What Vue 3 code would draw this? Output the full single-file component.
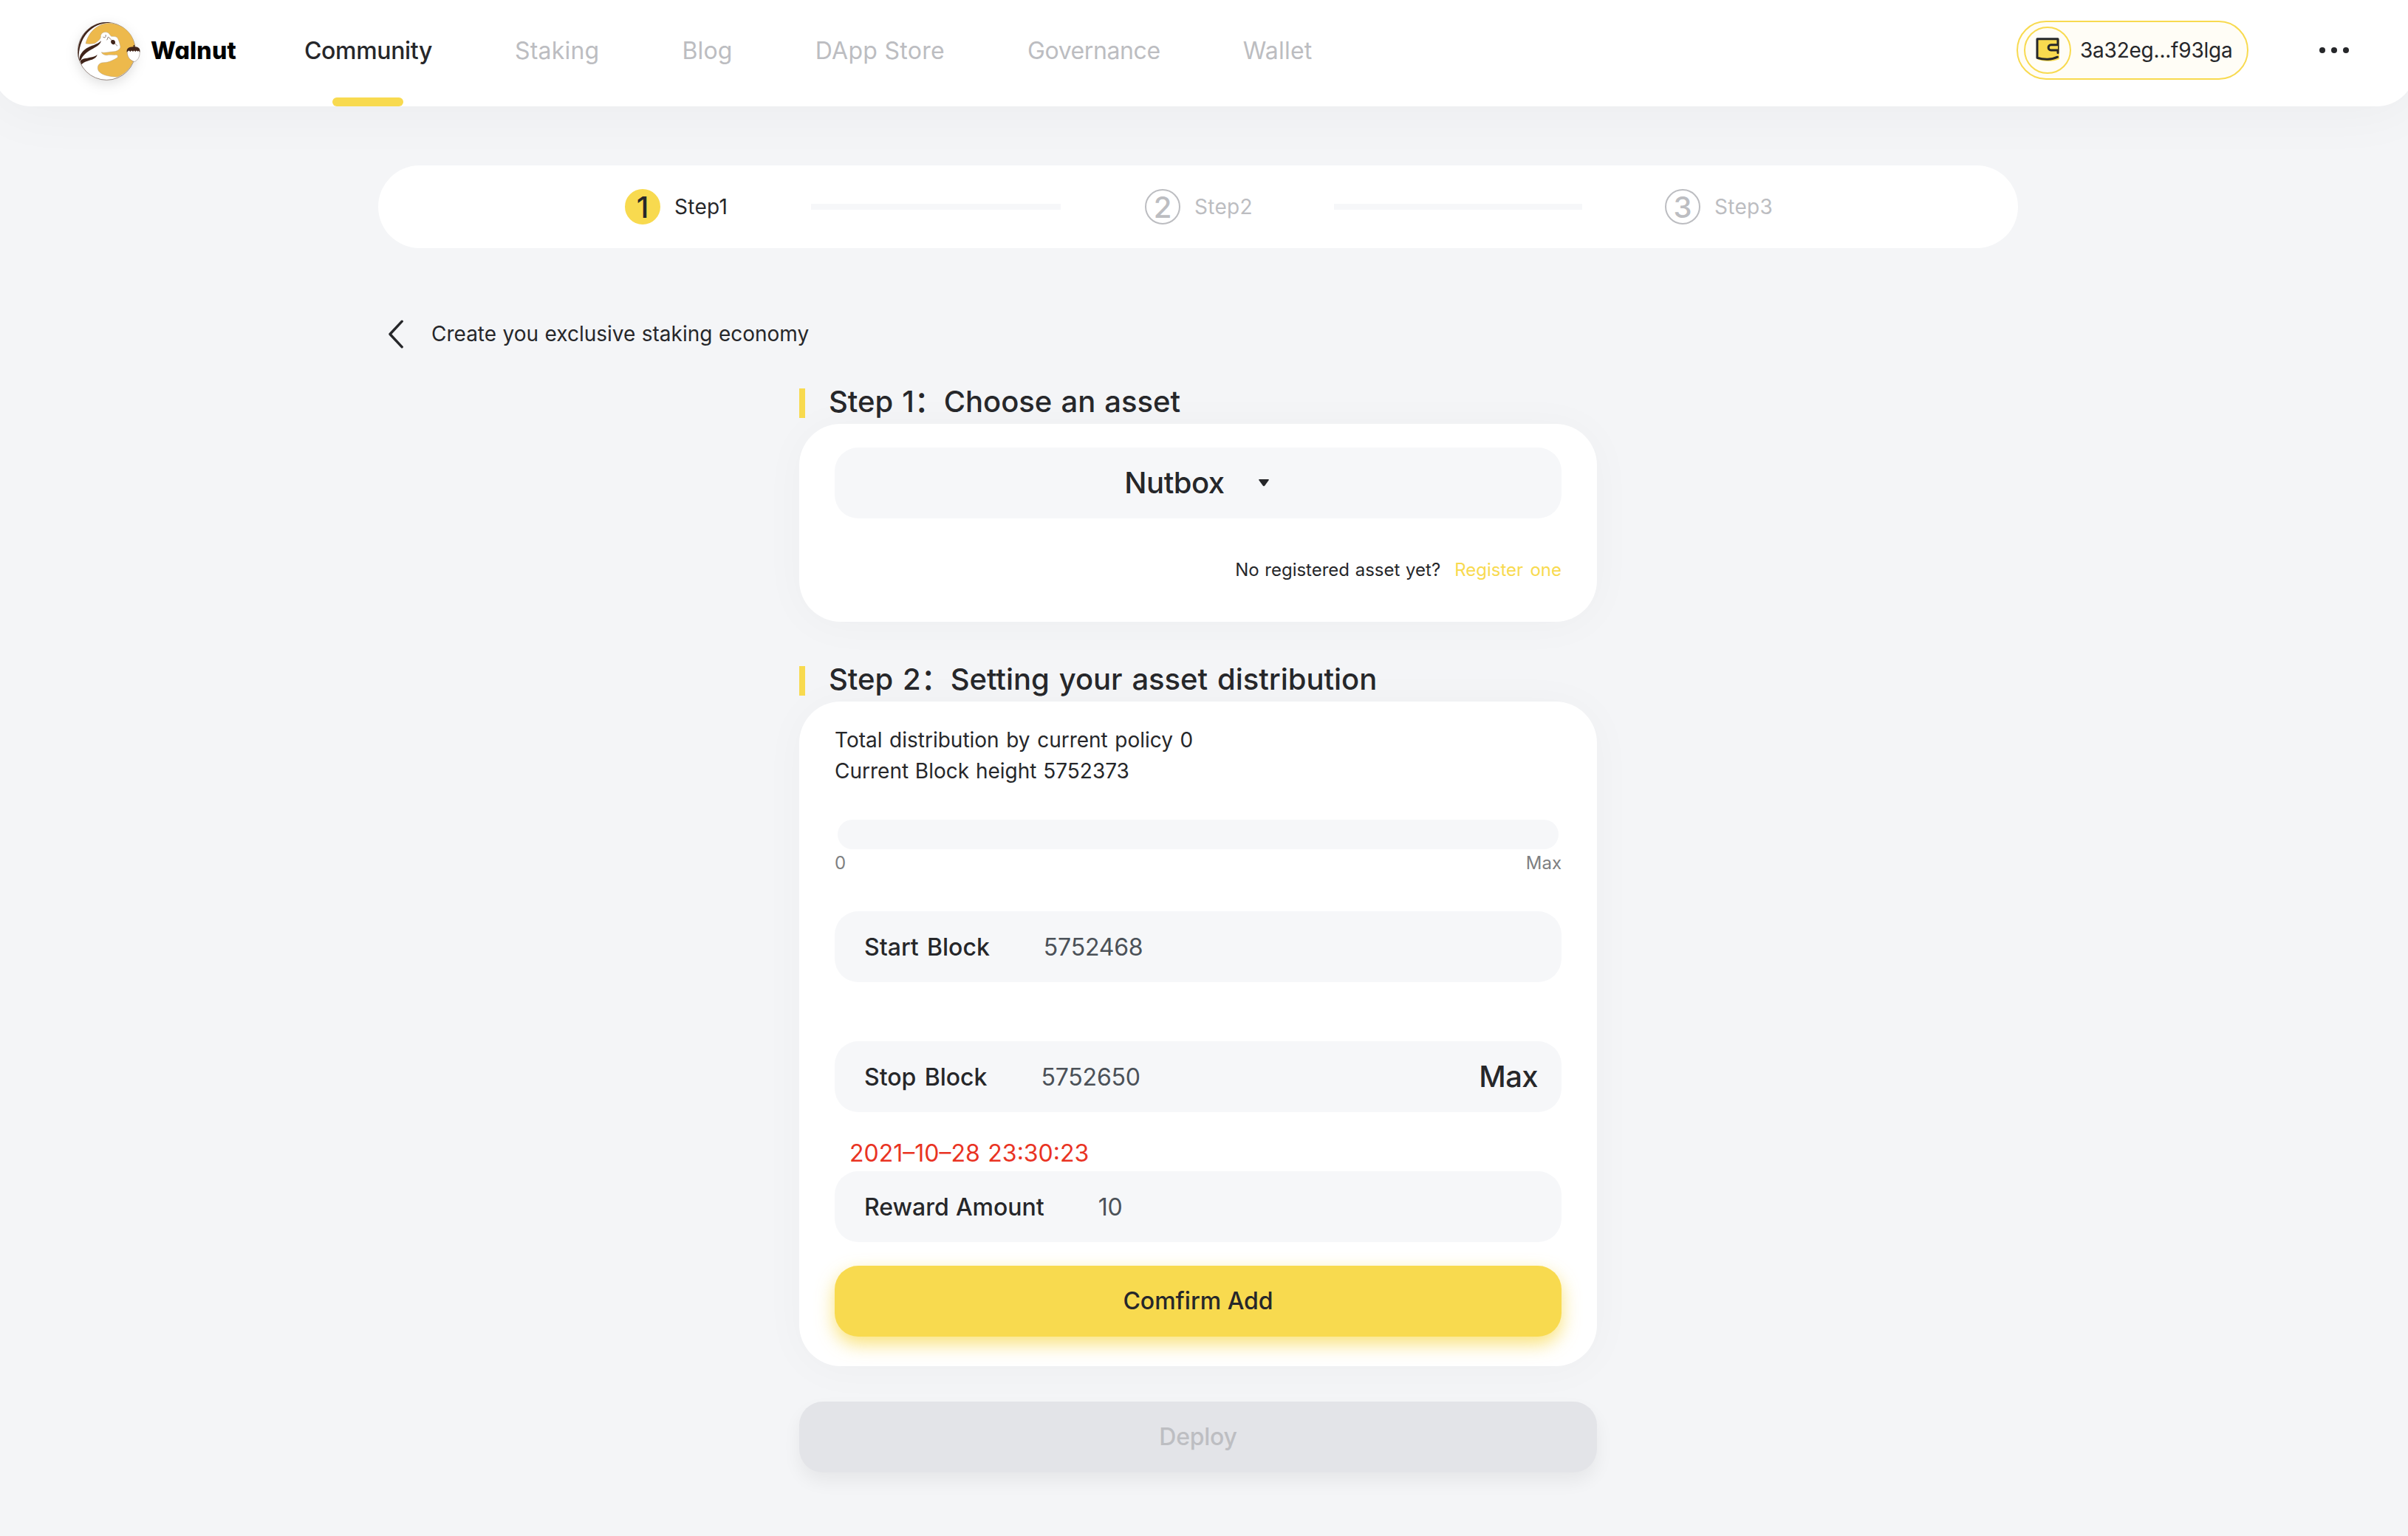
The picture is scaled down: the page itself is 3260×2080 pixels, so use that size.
<script setup>
const navItems = [
  { label: 'Community', spacing: -0.35, active: true },
  { label: 'Staking', spacing: 0.2 },
  { label: 'Blog', spacing: 0.2 },
  { label: 'DApp Store', spacing: 0.3 },
  { label: 'Governance', spacing: -0.4 },
  { label: 'Wallet', spacing: 0.2 },
]
const steps = [
  { n: 1, label: 'Step1', active: true },
  { n: 2, label: 'Step2' },
  { n: 3, label: 'Step3' },
]
</script>

<template>
  <div class="page">
    <header class="topbar">
      <div class="brand">
        <svg class="logo" viewBox="66 54 270 246" width="90" height="82">
          <circle class="disc" cx="193" cy="178" r="117" fill="#fff" stroke="#6b564c" stroke-width="2" />
          <path fill="#edb94c" stroke="#a89a86" stroke-width="1.2" d="M108 147C118 105 150 68 200 64C270 66 312 120 309 180C308 225 282 265 237 283C205 281 175 277 160 258C152 240 160 225 180 224C205 224 222 212 237 204C240 198 238 194 232 193C215 194 205 191 195 194C182 194 174 188 172 182C185 186 200 181 215 180C235 180 248 172 249 160C247 150 245 140 238 125C232 117 220 118 212 118C205 112 204 104 196 102C185 98 172 102 169 115C172 126 160 138 145 146C130 149 118 149 108 147Z" />
          <path fill="#40241a" d="M80 214C62 130 120 58 200 60L212 62C135 60 76 120 80 214Z" />
          <path fill="#40241a" d="M171 136C167 153 150 161 130 172C112 182 96 195 88 215L82 216C82 195 92 180 112 166C132 154 152 153 171 136Z" />
          <path fill="#40241a" d="M155 192C151 210 132 212 115 218C105 221 98 225 91 232L86 219C94 205 110 208 126 203C138 201 148 200 155 192Z" />
          <path fill="none" stroke="#40241a" stroke-width="1.8" d="M178 120C186 126 192 120 189 111M193 133C199 128 196 122 200 120L237 157" />
          <path fill="#40241a" d="M212 134C220 129 229 135 228 143C227 151 219 153 214 148C210 144 209 138 212 134Z" />
          <path fill="#fff" stroke="#8c7f78" stroke-width="1.5" d="M277 175L327 175C329 200 322 213 306 221C286 214 275 200 277 175Z" />
          <path fill="#40241a" d="M275 182C273 166 284 161 302 160L302 153L307 153L307 160C324 161 330 167 328 182L323 176L319 179L314 175L310 181L305 175L300 180L294 175L289 181L284 175Z" />
        </svg>
        <span class="brand-name">Walnut</span>
      </div>
      <nav class="nav">
        <a v-for="item in navItems" :key="item.label" class="nav-item" :class="{ active: item.active }" :style="{ letterSpacing: item.spacing + 'px' }">{{ item.label }}</a>
      </nav>
      <div class="account">
        <span class="avatar">
          <svg viewBox="0 0 34 34" width="34" height="34">
            <path fill="#f8da4f" d="M3.5 3.5H33V30C24 34 12 33.5 3.5 30.5Z" />
            <path fill="none" stroke="#26272a" stroke-width="3" stroke-linecap="round" stroke-linejoin="round" d="M31 21.5V2.8H3V28.3C12 31.2 23 31 30.5 27.2" />
            <path fill="#f8da4f" stroke="#26272a" stroke-width="3" d="M31 10.8H21.6C17 10.8 17 18 21.6 18H31" />
          </svg>
        </span>
        <span class="address">3a32eg...f93lga</span>
      </div>
      <div class="more"><i></i><i></i><i></i></div>
    </header>

    <section class="stepper">
      <template v-for="(s, i) in steps" :key="s.n">
        <div class="step" :class="{ active: s.active }">
          <span class="step-no">{{ s.n }}</span>
          <span>{{ s.label }}</span>
        </div>
        <div v-if="i < 2" class="step-line"></div>
      </template>
    </section>

    <div class="back">
      <svg viewBox="0 0 24 40" width="24" height="40">
        <path fill="none" stroke="#26272a" stroke-width="3.4" stroke-linecap="round" stroke-linejoin="round" d="M20.2 3.2L4 20.5L20.2 37.8" />
      </svg>
      <span>Create you exclusive staking economy</span>
    </div>

    <main class="content">
      <h2 class="title"><span>Step 1：Choose an asset</span></h2>
      <section class="card asset-card">
        <div class="field select">
          <span>Nutbox</span>
          <svg viewBox="0 0 14 10" width="14" height="10"><path fill="#26272a" d="M1 0H13Q14.400 .3 13.500 1.600L8.200 8.700Q7 9.800 5.800 8.700L.5 1.600Q-.4 .3 1 0Z" /></svg>
        </div>
        <p class="register"><span>No registered asset yet?</span><a>Register one</a></p>
      </section>

      <h2 class="title second"><span>Step 2：Setting your asset distribution</span></h2>
      <section class="card dist-card">
        <p class="info">Total distribution by current policy 0</p>
        <p class="info height">Current Block height 5752373</p>
        <div class="progress"></div>
        <div class="range"><span>0</span><span>Max</span></div>
        <div class="field row start">
          <label>Start Block</label><span class="value">5752468</span>
        </div>
        <div class="field row stop">
          <label>Stop Block</label><span class="value">5752650</span><span class="max">Max</span>
        </div>
        <p class="date">2021–10–28 23:30:23</p>
        <div class="field row reward">
          <label>Reward Amount</label><span class="value">10</span>
        </div>
        <button class="btn confirm">Comfirm Add</button>
      </section>
      <button class="btn deploy">Deploy</button>
    </main>
  </div>
</template>

<style>
body {
  background: #f4f5f7;
}
</style>

<style scoped>
* {
  box-sizing: border-box;
}
.page {
  height: 2080px;
  overflow: hidden;
  background: #f4f5f7;
  color: #26272a;
  font-family: Inter, "Noto Sans CJK SC", sans-serif;
  font-size: 28px;
}
p,
h2 {
  margin: 0;
}
.topbar {
  display: flex;
  align-items: center;
  height: 144px;
  margin: 0 -10px;
  padding: 0 90px 8px 112px;
  background: #fff;
  border-radius: 0 0 52px 52px;
  box-shadow: 0 8px 80px rgba(0, 0, 0, 0.04);
}
.brand {
  display: flex;
  align-items: center;
  width: 310px;
}
.logo {
  display: block;
  overflow: visible;
  margin-top: 2px;
}
.disc {
  filter: drop-shadow(0 14px 24px rgba(0, 0, 0, 0.13));
}
.brand-name {
  margin-left: 12px;
  color: #000;
  font-size: 32px;
  font-weight: 800;
  letter-spacing: 0.2px;
  font-feature-settings: "cv11";
}
.nav {
  display: flex;
  align-self: flex-start;
  gap: 112px;
}
.nav-item {
  position: relative;
  height: 144px;
  color: #bcbdc1;
  font-size: 32px;
  line-height: 137px;
}
.nav-item.active {
  color: #26272a;
  font-weight: 500;
}
.nav-item.active::after {
  content: "";
  position: absolute;
  left: 50%;
  bottom: 0;
  width: 96px;
  height: 12px;
  margin-left: -49px;
  border-radius: 6px;
  background: #f8da4f;
}
.account {
  display: flex;
  align-items: center;
  width: 314px;
  height: 80px;
  margin-left: auto;
  padding-left: 8px;
  border: 2px solid #f8da4f;
  border-radius: 40px;
  background: #fffdf6;
}
.avatar {
  display: flex;
  align-items: center;
  justify-content: center;
  width: 64px;
  height: 64px;
  border: 2px solid #f8da4f;
  border-radius: 50%;
}
.avatar svg {
  margin-top: -3px;
}
.address {
  margin-left: 12px;
  letter-spacing: -0.22px;
}
.more {
  display: flex;
  gap: 8px;
  margin-left: 96px;
}
.more i {
  width: 8px;
  height: 8px;
  border-radius: 50%;
  background: #26272a;
}
.stepper {
  display: flex;
  align-items: center;
  width: 2220px;
  height: 112px;
  margin: 80px 0 0 512px;
  padding-left: 334px;
  border-radius: 56px;
  background: #fff;
}
.step {
  display: flex;
  align-items: center;
  gap: 19px;
  width: 256px;
  color: #bcbdc1;
  letter-spacing: 0.3px;
}
.step.active {
  width: 252px;
  color: #26272a;
}
.step-no {
  display: flex;
  align-items: center;
  justify-content: center;
  width: 48px;
  height: 48px;
  padding-top: 2px;
  border: 2px solid #bcbdc1;
  border-radius: 50%;
  font-size: 40px;
  font-weight: 500;
  line-height: 44px;
  letter-spacing: 0;
}
.active .step-no {
  border-color: #f8da4f;
  background: #f8da4f;
}
.step-line {
  width: 336px;
  height: 8px;
  margin-right: 112px;
  background: #f6f7f9;
}
.active + .step-line {
  width: 338px;
  margin-right: 114px;
}
.back {
  display: flex;
  align-items: center;
  height: 56px;
  margin: 88px 0 0 524px;
  word-spacing: 0.6px;
}
.back span {
  margin-left: 36px;
}
.content {
  width: 1080px;
  margin: 46px 0 0 1082px;
}
.title {
  display: flex;
  height: 40px;
  padding-left: 32px;
  border-left: 8px solid #f8da4f;
  font-size: 40px;
  font-weight: 500;
  line-height: 35px;
  letter-spacing: -0.05px;
  white-space: nowrap;
  word-spacing: 1.6px;
}
.title.second {
  margin-top: 60px;
  word-spacing: 2.4px;
}
.card {
  margin-top: 8px;
  border-radius: 56px;
  background: #fff;
  box-shadow: 0 4px 60px rgba(0, 0, 0, 0.03);
}
.asset-card {
  height: 268px;
  padding: 32px 48px;
}
.dist-card {
  height: 900px;
  padding: 31px 48px 40px;
}
.field {
  display: flex;
  align-items: center;
  height: 96px;
  border-radius: 32px;
  background: #f6f7f9;
}
.select {
  justify-content: center;
  gap: 46px;
  padding-right: 4px;
  font-size: 40px;
  font-weight: 500;
  line-height: 46px;
  letter-spacing: -0.5px;
}
.register {
  display: flex;
  justify-content: flex-end;
  gap: 19px;
  margin-top: 51px;
  font-size: 24px;
  line-height: 37px;
  word-spacing: 0.9px;
}
.register a {
  color: #f8da4f;
  word-spacing: 2.6px;
}
.info {
  line-height: 42px;
  word-spacing: 1.7px;
}
.info.height {
  word-spacing: 0.9px;
}
.progress {
  height: 40px;
  margin: 45px 4px 1px;
  border-radius: 20px;
  background: #f6f7f9;
}
.range {
  display: flex;
  justify-content: space-between;
  color: #7e7f81;
  font-size: 24px;
  line-height: 36px;
}
.row {
  padding: 0 32px 0 40px;
  font-size: 32px;
}
.row label {
  font-weight: 500;
  word-spacing: 2.8px;
}
.value {
  margin-left: 73px;
  color: #4b5158;
  letter-spacing: -0.2px;
}
.start {
  margin-top: 47px;
}
.stop {
  margin-top: 80px;
}
.reward label {
  word-spacing: 0.6px;
}
.max {
  margin-left: auto;
  padding-bottom: 1px;
  font-size: 40px;
  font-weight: 500;
  letter-spacing: -0.6px;
}
.date {
  margin-top: 32px;
  padding-left: 20px;
  color: #e93323;
  font-size: 32px;
  line-height: 48px;
  word-spacing: 1.6px;
}
.btn {
  display: block;
  width: 100%;
  height: 96px;
  padding: 0;
  border: 0;
  border-radius: 32px;
  color: #26272a;
  font-family: inherit;
  font-size: 32px;
  font-weight: 500;
  line-height: 96px;
}
.confirm {
  margin-top: 32px;
  background: #f8da4f;
  box-shadow: 0 10px 24px rgba(248, 218, 79, 0.75);
}
.deploy {
  margin-top: 48px;
  background: #e3e4e8;
  color: #bdbec2;
  letter-spacing: -0.25px;
  box-shadow: 0 12px 24px rgba(0, 0, 0, 0.06);
}
</style>
